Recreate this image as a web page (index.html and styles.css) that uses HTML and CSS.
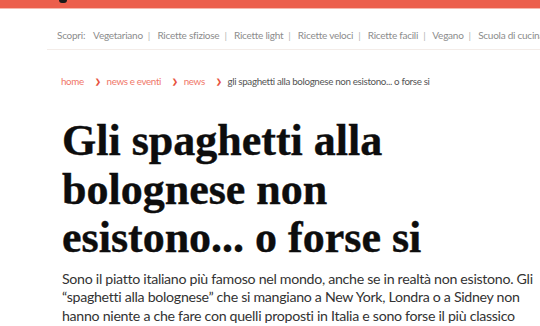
FILE: index.html
```html
<!DOCTYPE html>
<html lang="it">
<head>
<meta charset="utf-8">
<link rel="stylesheet" href="styles.css">
</head>
<body>
<header class="topbar">
  <span class="logo-bit"></span>
</header>
<nav class="discover">
  <span class="label">Scopri:</span>
  <a>Vegetariano</a><span class="sep">|</span>
  <a>Ricette sfiziose</a><span class="sep">|</span>
  <a>Ricette light</a><span class="sep">|</span>
  <a>Ricette veloci</a><span class="sep">|</span>
  <a>Ricette facili</a><span class="sep">|</span>
  <a>Vegano</a><span class="sep">|</span>
  <a>Scuola di cucina</a>
</nav>
<main class="article">
  <ol class="crumbs">
    <li><a>home</a></li>
    <li class="chev">&#x276F;</li>
    <li><a>news e eventi</a></li>
    <li class="chev">&#x276F;</li>
    <li><a>news</a></li>
    <li class="chev">&#x276F;</li>
    <li class="current">gli spaghetti alla bolognese non esistono... o forse si</li>
  </ol>
  <h1 class="title">Gli spaghetti alla bolognese non esistono... o forse si</h1>
  <p class="lead">Sono il piatto italiano più famoso nel mondo, anche se in realtà non esistono. Gli “spaghetti alla bolognese” che si mangiano a New York, Londra o a Sidney non hanno niente a che fare con quelli proposti in Italia e sono forse il più classico esempio di italian sounding.</p>
</main>
</body>
</html>
```
FILE: styles.css
```css
html, body { margin: 0; padding: 0; background: #fff; overflow: hidden; }
body { font-family: Lato, "Open Sans", sans-serif; width: 540px; height: 326px; }
.topbar { height: 8px; background: #ec5f4c; border-bottom: 1px solid #f6b8ad; position: relative; }
.logo-bit { position: absolute; left: 59px; top: 0; width: 8px; height: 3px; background: #1a1a1a; border-radius: 0 0 5px 5px; }
.discover { margin: 20px 0 0 47px; padding: 0 0 7px 10px; border-bottom: 1px solid #f3ece8; white-space: nowrap; overflow: hidden; font-size: 10px; letter-spacing: -0.25px; color: #8c8c8c; line-height: 13px; }
.discover .label { margin-right: 6px; }
.discover a { color: #8c8c8c; }
.discover .sep { margin: 0 5px; color: #b5b5b5; }
.article { padding: 0 0 0 62px; }
.crumbs { list-style: none; margin: 24px 0 0 -1px; padding: 0; display: flex; align-items: center; font-size: 9.8px; letter-spacing: -0.35px; line-height: 14px; white-space: nowrap; }
.crumbs a { color: #f07769; }
.crumbs .chev { color: #e8533f; font-size: 7px; font-weight: 700; margin: 0 6px 0 11px; }
.crumbs .current { color: #555; }
.title { font-family: "Liberation Serif", "DejaVu Serif", serif; font-weight: 700; font-size: 44px; line-height: 48.5px; color: #0d0d0d; margin: 29px 0 0 0; width: 400px; -webkit-text-stroke: 0.4px #0d0d0d; }
.lead { margin: 7px 0 0 0; width: 482px; font-size: 14.2px; letter-spacing: -0.3px; line-height: 18.7px; color: #333; }
```
